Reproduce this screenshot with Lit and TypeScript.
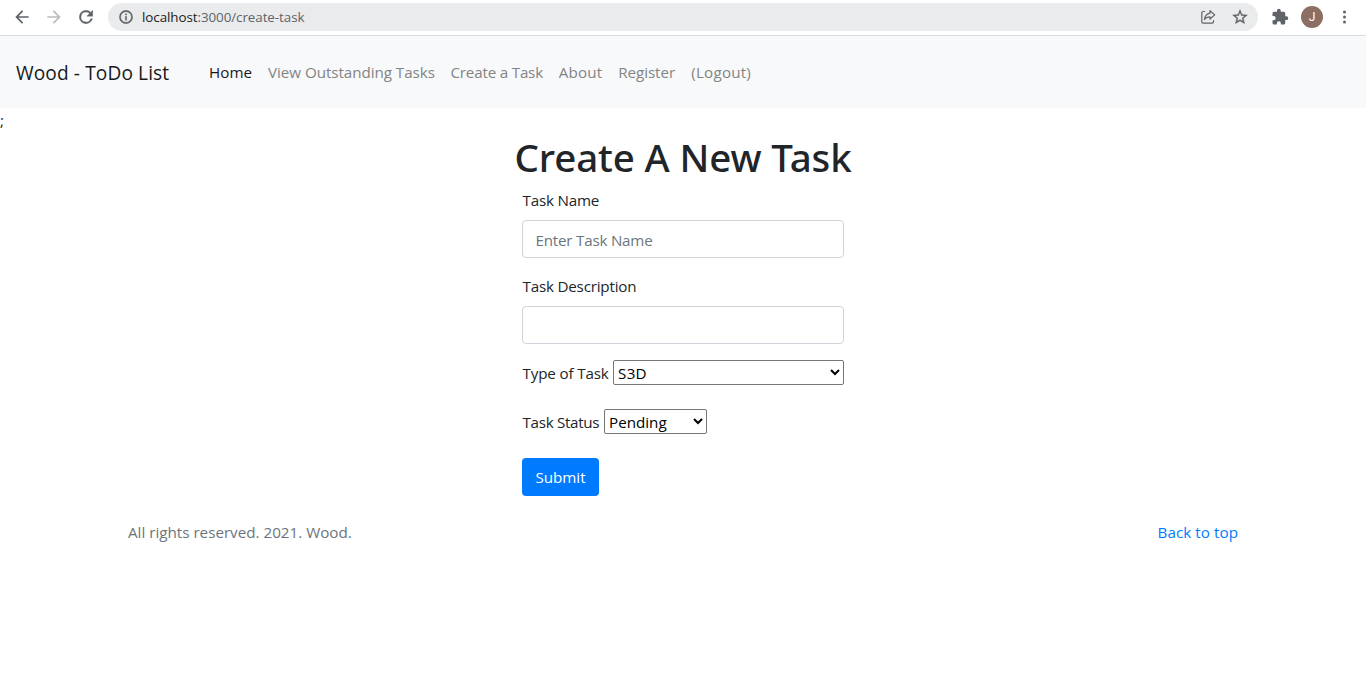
import { LitElement, html, css } from "lit";
import { customElement } from "lit/decorators.js";
import { classMap } from "lit/directives/class-map.js";

const NAV = [
  { label: "Home", cls: "home" },
  { label: "View Outstanding Tasks", cls: "view" },
  { label: "Create a Task", cls: "create" },
  { label: "About", cls: "about" },
  { label: "Register", cls: "register" },
  { label: "(Logout)", cls: "logout" },
];

@customElement("browser-bar")
export class BrowserBar extends LitElement {
  static styles = css`
    :host { display: flex; align-items: center; box-sizing: border-box; height: 36px; padding: 0 9px 2px 12px;
      border-bottom: 1px solid #dadce0; background: #fff; color: #5f6368; }
    svg { display: block; flex: none; width: 20px; height: 20px; fill: currentColor; }
    .tool { margin-right: 12px; }
    .off { color: #babcbe; }
    .omni { display: flex; align-items: center; box-sizing: border-box; width: 1150px; height: 28px;
      border-radius: 14px; background: #e9ebec; padding: 0 9px 0 10px; }
    .omni .info { width: 16px; height: 16px; }
    .omni .small { width: 18px; height: 18px; }
    .url { flex: 1; margin-left: 8px; font-size: 13.4px; line-height: 20px; letter-spacing: -0.07px; color: #5f6368; }
    .host { color: #202124; }
    .omni .share { margin-right: 14px; }
    .puzzle { width: 18px; height: 18px; margin-left: 13px; }
    .avatar { width: 22px; height: 22px; margin-left: 12px; border-radius: 50%; background: #8d6e63; color: #fff;
      font: 12px/22px Roboto, sans-serif; text-align: center; }
    .more { margin-left: 11px; }
  `;
  render() {
    return html`
      <svg class="tool" viewBox="0 0 24 24"><path d="M20 11H7.830l5.590-5.590L12 4l-8 8 8 8 1.410-1.410L7.830 13H20z"/></svg>
      <svg class="tool off" viewBox="0 0 24 24"><path d="M12 4l-1.410 1.410L16.170 11H4v2h12.170l-5.580 5.590L12 20l8-8z"/></svg>
      <svg class="tool" viewBox="0 0 24 24"><path d="M17.650 6.350A7.960 7.960 0 0 0 12 4a8 8 0 1 0 7.730 10h-2.080A6 6 0 1 1 12 6c1.660 0 3.140.69 4.220 1.780L13 11h7V4z" stroke="currentColor" stroke-width=".5"/></svg>
      <div class="omni">
        <svg class="info" viewBox="0 0 24 24"><path d="M11 17h2v-6h-2zm1-15a10 10 0 1 0 0 20 10 10 0 0 0 0-20m0 18a8 8 0 1 1 0-16 8 8 0 0 1 0 16M11 9h2V7h-2z" stroke="currentColor" stroke-width=".5"/></svg>
        <div class="url"><span class="host">localhost</span>:3000/create-task</div>
        <svg class="small share" viewBox="0 0 18 18"><g fill="none" stroke="currentColor" stroke-width="1.2" stroke-linejoin="round" stroke-linecap="round"><path d="M5.500 3.500H4.200A1.400 1.400 0 0 0 2.800 4.900v8.900a1.400 1.400 0 0 0 1.400 1.400h8.900a1.400 1.400 0 0 0 1.400-1.400V12.500"/><path d="M11 2.700L15.700 6.900 11 11V8.800C8.500 8.800 6.800 9.600 5.500 11.500 5.900 8.200 7.600 5.700 11 5.100z"/></g></svg>
        <svg class="small" viewBox="0 0 24 24"><path d="M22 9.240l-7.190-.62L12 2 9.190 8.630 2 9.240l5.460 4.730L5.820 21 12 17.270 18.180 21l-1.630-7.030zM12 15.400l-3.760 2.270 1-4.280-3.320-2.880 4.380-.38L12 6.100l1.710 4.040 4.380.38-3.320 2.880 1 4.280z" stroke="currentColor" stroke-width=".4"/></svg>
      </div>
      <svg class="puzzle" viewBox="0 0 24 24"><path d="M20.500 11H19V7a2 2 0 0 0-2-2h-4V3.500a2.500 2.500 0 0 0-5 0V5H4a2 2 0 0 0-1.990 2v3.800H3.500a2.700 2.700 0 0 1 0 5.400H2V20a2 2 0 0 0 2 2h3.800v-1.500a2.700 2.700 0 0 1 5.400 0V22H17a2 2 0 0 0 2-2v-4h1.500a2.500 2.500 0 0 0 0-5"/></svg>
      <div class="avatar">J</div>
      <svg class="more" viewBox="0 0 20 20"><circle cx="10.500" cy="5" r="1.500"/><circle cx="10.500" cy="10" r="1.500"/><circle cx="10.500" cy="15" r="1.500"/></svg>
    `;
  }
}

@customElement("app-root")
export class AppRoot extends LitElement {
  static styles = css`
    :host { display: block; height: 692px; overflow: hidden; background: #fff; color: #212529;
      font: 15.2px/24px "Open Sans", "Noto Sans", sans-serif; }
    * { box-sizing: border-box; }
    nav { display: flex; align-items: center; height: 72px; padding: 0 16px; background: #f8f9fa; }
    .brand { width: 193px; padding-top: 1px; font-size: 19.1px; letter-spacing: 0.12px; color: #17181a; }
    .link { margin-right: 16px; color: #838484; white-space: nowrap; text-decoration: none; }
    .home { width: 43px; color: #17181a; letter-spacing: 0.05px; }
    .view { width: 166.5px; letter-spacing: -0.05px; }
    .create { width: 92.3px; letter-spacing: -0.2px; }
    .about { width: 43.5px; letter-spacing: 0.15px; }
    .register { width: 57px; letter-spacing: -0.08px; }
    .logout { letter-spacing: 0.2px; }
    .stray { height: 24px; }
    h1 { margin: 0 0 8px; padding-top: 1px; height: 48px; font: 500 38.5px/48px "Noto Sans", sans-serif;
      letter-spacing: -0.13px; text-align: center; }
    form { width: 322px; margin: 0 auto; }
    .field { margin-bottom: 16px; }
    .label { display: block; margin-bottom: 8px; height: 24px; letter-spacing: -0.2px; text-indent: 0.5px; }
    .input { display: block; width: 100%; height: 38px; padding: 1px 12.5px 0; border: 1px solid #ced4da; border-radius: 4px;
      background: #fff; font: inherit; letter-spacing: -0.22px; outline: 0; }
    .input::placeholder { color: #6c757d; opacity: 1; }
    .row { display: flex; align-items: center; height: 25px; margin-bottom: 24px; }
    .cap { white-space: nowrap; text-indent: 0.5px; }
    .type { width: 91px; letter-spacing: -0.15px; }
    .status { width: 82px; letter-spacing: -0.3px; }
    select { height: 25px; padding: 0; font: inherit; color: #000; background: #fff; border: 1px solid #767676; border-radius: 2px; }
    .wide { width: 231px; letter-spacing: 0.3px; }
    .narrow { width: 103px; }
    .submit { display: block; width: 77px; height: 38px; padding: 0; border: 0; border-radius: 4px;
      background: #007bff; color: #fff; font: inherit; text-align: center; }
    footer { display: flex; justify-content: space-between; width: 1110px; margin: 24px auto 0; color: #6c757d; }
    .top { color: #007bff; text-decoration: none; letter-spacing: 0.06px; }
  `;
  render() {
    return html`
      <browser-bar></browser-bar>
      <nav>
        <div class="brand">Wood - ToDo List</div>
        ${NAV.map((n) => html`<a class=${classMap({ link: true, [n.cls]: true })}>${n.label}</a>`)}
      </nav>
      <div class="stray">;</div>
      <h1>Create A New Task</h1>
      <form>
        <div class="field"><label class="label">Task Name</label><input class="input" placeholder="Enter Task Name" /></div>
        <div class="field"><label class="label">Task Description</label><input class="input" /></div>
        <div class="row"><label class="cap type">Type of Task</label><select class="wide"><option>S3D</option></select></div>
        <div class="row"><label class="cap status">Task Status</label><select class="narrow"><option>Pending</option></select></div>
        <button class="submit" type="button">Submit</button>
      </form>
      <footer><span>All rights reserved. 2021. Wood.</span><a class="top">Back to top</a></footer>
    `;
  }
}
